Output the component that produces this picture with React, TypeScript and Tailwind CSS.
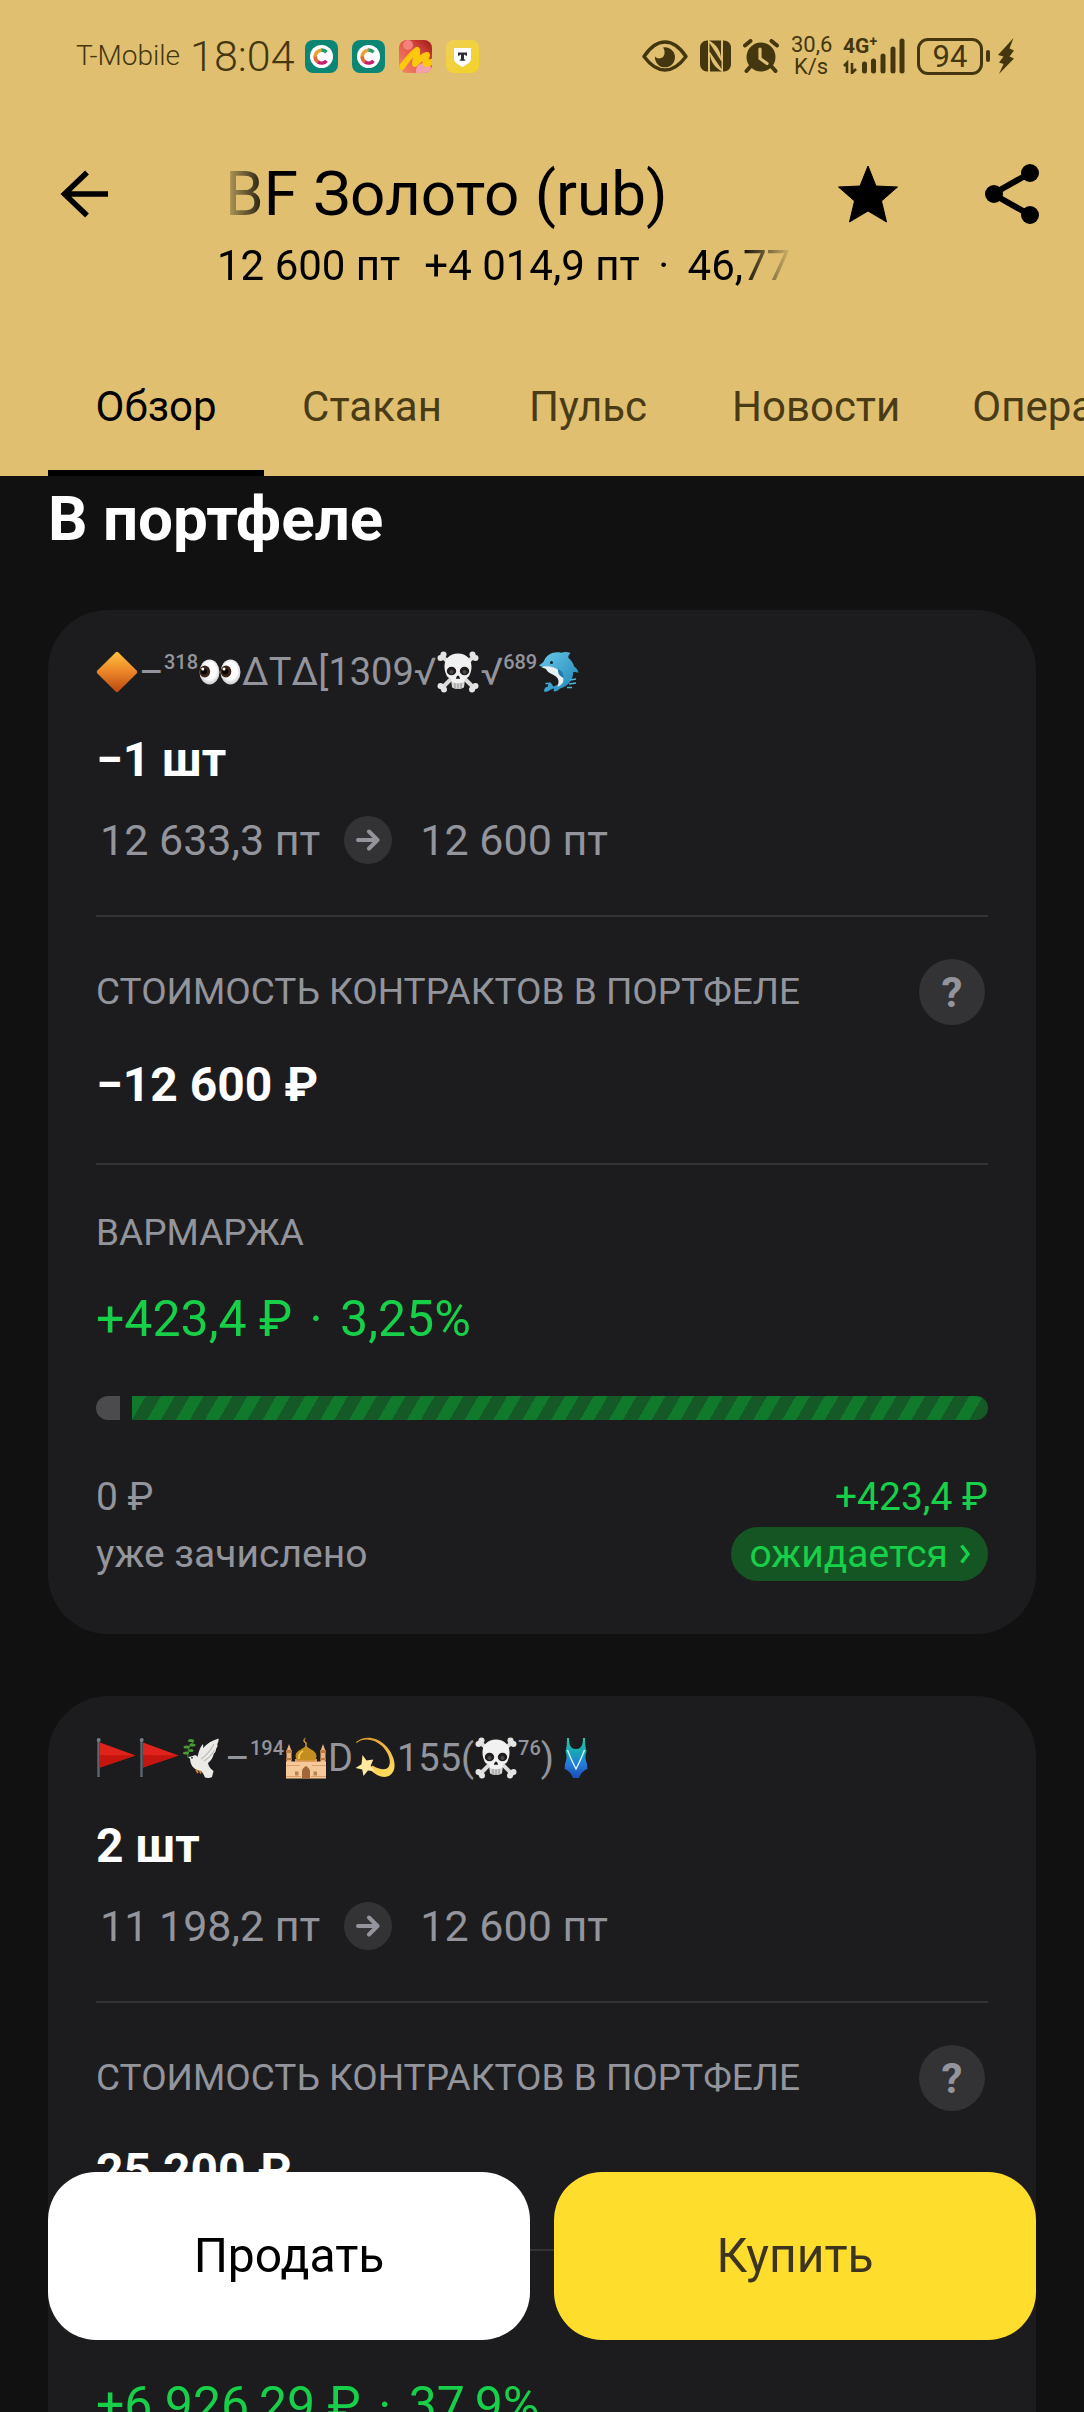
import { useState } from 'react';
import type { ReactNode } from 'react';

const Diamond = () => (
  <svg viewBox="0 0 42 42" className="h-[42px] w-[42px] shrink-0" aria-hidden="true">
    <defs>
      <linearGradient id="diamond" x1="0" y1="0" x2="0" y2="1">
        <stop offset="0" stopColor="#fdc23c" />
        <stop offset="0.45" stopColor="#ef8a2b" />
        <stop offset="1" stopColor="#b9480f" />
      </linearGradient>
    </defs>
    <path d="M19.6 1.4a2 2 0 0 1 2.8 0L40.6 19.6a2 2 0 0 1 0 2.8L22.4 40.6a2 2 0 0 1-2.8 0L1.4 22.4a2 2 0 0 1 0-2.8Z" fill="url(#diamond)" />
  </svg>
);

const Eyes = () => (
  <svg viewBox="0 0 42 42" className="h-[42px] w-[42px] shrink-0" aria-hidden="true">
    <defs>
      <radialGradient id="eyeball" cx="0.5" cy="0.45" r="0.55">
        <stop offset="0.6" stopColor="#ffffff" />
        <stop offset="1" stopColor="#c9c9c9" />
      </radialGradient>
    </defs>
    <ellipse cx="10.5" cy="21" rx="10" ry="12.5" fill="url(#eyeball)" />
    <ellipse cx="31.5" cy="21" rx="10" ry="12.5" fill="url(#eyeball)" />
    <ellipse cx="5.8" cy="20.5" rx="5.3" ry="6" fill="#3a2318" />
    <ellipse cx="27" cy="20.5" rx="5.3" ry="6" fill="#3a2318" />
    <circle cx="5" cy="20.5" r="3" fill="#080404" />
    <circle cx="26.2" cy="20.5" r="3" fill="#080404" />
    <circle cx="3.8" cy="18" r="1.5" fill="#fff" />
    <circle cx="25" cy="18" r="1.5" fill="#fff" />
  </svg>
);

const Skull = () => (
  <svg viewBox="0 0 42 42" className="h-[42px] w-[42px] shrink-0" aria-hidden="true">
    <g stroke="#dcdcdc" strokeWidth="4" strokeLinecap="round">
      <path d="M5 5 37 37M37 5 5 37" />
    </g>
    <g fill="#e4e4e4">
      <circle cx="6.5" cy="3.5" r="3" />
      <circle cx="3.5" cy="7" r="3" />
      <circle cx="35.5" cy="3.5" r="3" />
      <circle cx="38.5" cy="7" r="3" />
      <circle cx="3.5" cy="35" r="3" />
      <circle cx="7" cy="38.5" r="3" />
      <circle cx="38.5" cy="35" r="3" />
      <circle cx="35" cy="38.5" r="3" />
    </g>
    <path d="M21 2.5C12.500 2.500 7.500 8 7.500 15.500c0 3 .5 5 1.500 7.500.8 2.200 1.500 3.500 5 4.500l1 8.500c1.500 2 10.500 2 12 0l1-8.500c3.500-1 4.200-2.300 5-4.500 1-2.500 1.500-4.500 1.500-7.500C34.500 8 29.500 2.500 21 2.500Z" fill="#f1f1f1" />
    <path d="M15 31c2 1.500 10 1.500 12 0l-.5 5.500c-2 1.800-9 1.800-11 0Z" fill="#d2d2d2" />
    <path d="M18 32v5M21 32.300v5.200M24 32v5" stroke="#929292" />
    <ellipse cx="14.500" cy="20" rx="4.700" ry="4.300" fill="#211d1d" />
    <ellipse cx="27.500" cy="20" rx="4.700" ry="4.300" fill="#211d1d" />
    <circle cx="14.500" cy="21" r="2" fill="#4c4848" />
    <circle cx="27.500" cy="21" r="2" fill="#4c4848" />
    <path d="M21 24.500c-1 0-2.200 2.500-1.800 3.300.5.800 1.300-.2 1.800-.2s1.300 1 1.800.2c.4-.8-.8-3.300-1.800-3.300Z" fill="#141212" />
  </svg>
);

const Dolphin = () => (
  <svg viewBox="0 0 42 42" className="h-[42px] w-[42px] shrink-0" aria-hidden="true">
    <defs>
      <linearGradient id="dolphin" x1="0" y1="0" x2="1" y2="1">
        <stop offset="0" stopColor="#6cc9ea" />
        <stop offset="1" stopColor="#1b83b5" />
      </linearGradient>
    </defs>
    <path d="M1 14.500c2-2 4-2.500 5-4.500C8.500 3.500 16 0 23 1.800c3.500-1.300 7-1 9.500.2-1.500 1.500-2.300 3-2.200 4.800 3.200 2.500 5 5.500 6 9 2.200 1.200 3.700 3.200 4.200 6-2-.8-3.600-1-5.200-.8-.2 8-5.300 14.500-13.300 16.500-1.500 2-3.500 3-6 3-.5-1-.5-2 0-3.200L12 39c-2 1.800-4 2-6 1.500 0-3 1.500-4.500 4-5 .2-1.500 0-3 1-4.500 2.500 1 3.500 2.500 4 4.500 5-1 9-4.500 9.500-9.500C22.500 20 16 15.500 9 16c-3 0-6.500 0-8-1.500Z" fill="url(#dolphin)" />
    <path d="M3 16c6.500-1.500 14-.5 19 4.500 3 3 4 7 3 11-1.500 2-3 3.200-5.500 4.200 1.500-4 1.500-7.500-1-9.700-3.500-3-8.500-3.500-10.500-8Z" fill="#e6f1f5" />
    <path d="M20 18c3.500 1.500 6 4.500 5.500 9-3.500-1.500-6-4.500-5.500-9Z" fill="#1f7ca8" />
    <circle cx="13.500" cy="11.500" r="1.500" fill="#12222c" />
    <path d="M7.500 32.500h3M32 29l6-1M31 33l7-1M29 36.500h5" stroke="#4db4dc" strokeWidth="1.400" />
  </svg>
);

const Flag = () => (
  <svg viewBox="0 0 42 42" className="h-[42px] w-[42px] shrink-0" aria-hidden="true">
    <path d="M2.500 3v37" stroke="#5f666d" strokeWidth="2.400" />
    <circle cx="2.700" cy="3" r="2" fill="#757c83" />
    <path d="M4 5.500 39.500 18.500 4 30.500Z" fill="#e0221c" />
    <path d="M4 18 39.500 18.500 4 30.500Z" fill="#c4150f" />
  </svg>
);

const Dove = () => (
  <svg viewBox="0 0 42 42" className="h-[42px] w-[42px] shrink-0" aria-hidden="true">
    <path d="M12 18.500c1.500-.5 3 .2 3.500 1.500C17 14 18 10 21 7c.3 1.500 0 3 0 4C25 6.500 30 3.500 36.500 1.500c.3 2-.2 4-1.200 5.500.5 2 0 3.500-1.300 5 0 2-.8 3.500-2.200 4.800-1 4.200-3 7.200-5.800 9.200.5 3.500 3 6.500 5.500 8l-1.500 6c-3 1.500-5.500 1-7 .5-1-2.500-2-4.500-4-6.500-5-.5-9.500-4-10.500-9-.5-2 .5-3.500-2.500-4.500 1.500-1 4-1.300 6-2Z" fill="#ebeae6" />
    <path d="M19 22c6-4 10-9 13-15M22 24c4-2.500 8-6 10.500-11" stroke="#bdbcb8" strokeWidth="1.200" fill="none" />
    <circle cx="10" cy="20.700" r="0.900" fill="#222" />
    <path d="M6 21C5 14 7 8 12 4" stroke="#3a7e2b" strokeWidth="1.300" fill="none" />
    <g fill="#4c9a35">
      <ellipse cx="4" cy="16" rx="3" ry="1.600" />
      <ellipse cx="9" cy="13.500" rx="2.600" ry="1.600" />
      <ellipse cx="4.500" cy="10" rx="3" ry="1.600" />
      <ellipse cx="10.500" cy="8" rx="3" ry="1.500" />
      <ellipse cx="9" cy="3.500" rx="3" ry="1.600" />
    </g>
    <path d="m14 32.500 2 3.500m1.500-2.500 1.500 3" stroke="#d88e3b" strokeWidth="1.600" />
  </svg>
);

const Mosque = () => (
  <svg viewBox="0 0 42 42" className="h-[42px] w-[42px] shrink-0" aria-hidden="true">
    <path d="M4 7 6.500 14v27H1.500V14ZM38 7l2.500 7v27h-5V14Z" fill="#eeb27c" />
    <path d="M1 13h6v3H1ZM35 13h6v3h-6ZM1 21h6v2H1ZM35 21h6v2h-6Z" fill="#b97c43" />
    <path d="M1 24.500h40V41.500H1Z" fill="#f6c99b" />
    <path d="M10 22h22v3H10Z" fill="#e2a066" />
    <path d="M21 8.500c1 3 10.500 4.500 10.500 10.500 0 1.500-.5 3-1.500 4.500H12c-1-1.500-1.500-3-1.500-4.500C10.500 13 20 11.500 21 8.500Z" fill="#c58c1e" />
    <path d="M18 14c-3.500 2-4.500 4.500-4 8" stroke="#f1cc5b" strokeWidth="1.800" fill="none" />
    <path d="M21 6v4" stroke="#d59c2c" strokeWidth="1.400" />
    <path d="M23 5.500a2.800 2.800 0 1 1-1.500-4.800 2.200 2.200 0 0 0 1.500 4.800Z" fill="#d59c2c" />
    <path d="M17 41.500V34c0-2.500 2-3.500 4-5 2 1.500 4 2.500 4 5v7.500Z" fill="#a26739" />
    <path d="M10 34.500h3.500v4H10ZM28.500 34.500H32v4h-3.500Z" fill="#bb8350" />
    <path d="M1 28.500h14M27 28.500h14M1 39.500h15M26 39.500h15" stroke="#dc9f6c" strokeWidth="1.200" />
  </svg>
);

const Dizzy = () => (
  <svg viewBox="0 0 42 42" className="h-[42px] w-[42px] shrink-0" aria-hidden="true">
    <defs>
      <linearGradient id="trail" x1="0" y1="0" x2="0.400" y2="1">
        <stop offset="0" stopColor="#d9982a" />
        <stop offset="1" stopColor="#ffd95b" />
      </linearGradient>
    </defs>
    <path d="M2 5C10-1.500 22-.5 31 8c8 8 11.500 18.500 8.500 26-4 8.500-14.500 8-24-2l3-3.500c8 5 14.500 5 16.500.5 2.500-6-1-14-7-20C19.500 1.500 9.500.5 2.500 6Z" fill="url(#trail)" />
    <path d="m8.500 18 4 5.500 6.800-1-2.600 6.300 4 5.500-6.800-.8L9.500 39l-1.300-6.500L1.500 31l6-3.700Z" fill="#ffe9a0" />
  </svg>
);

const Swimsuit = () => (
  <svg viewBox="0 0 42 42" className="h-[42px] w-[42px] shrink-0" aria-hidden="true">
    <defs>
      <linearGradient id="suit" x1="0" y1="0" x2="0" y2="1">
        <stop offset="0" stopColor="#23c9ac" />
        <stop offset="0.400" stopColor="#1aa0ba" />
        <stop offset="0.650" stopColor="#2779e0" />
        <stop offset="1" stopColor="#1b4fb0" />
      </linearGradient>
    </defs>
    <path d="M12 1h2c0 6 1 11 7 11s7-5 7-11h2c0 6 .5 10 1.500 13-1.500 5-1.500 8 .5 13l.5 5c-4 1.500-6.500 4-8.500 9h-6c-2-5-4.500-7.500-8.500-9l.5-5c2-5 2-8 .5-13C11.500 11 12 7 12 1Z" fill="url(#suit)" />
    <path d="M12.500 13C15 20 18 26 21 32c3-6 6-12 8.500-19" stroke="#d9fff5" strokeWidth="1.300" fill="none" />
  </svg>
);

const Tick = ({ children }: { children: ReactNode }) => <sup className="-top-4 text-[20px] font-medium">{children}</sup>;

const CopperApp = () => (
  <svg viewBox="0 0 33 33" className="h-[33px] w-[33px]" aria-hidden="true">
    <rect width="33" height="33" rx="8" fill="#0b8574" />
    <circle cx="16.500" cy="16.500" r="11.500" fill="#fff" />
    <g fill="none" strokeWidth="3.600">
      <path d="M21.500 12.200A6.500 6.500 0 0 0 16 10.200" stroke="#1f9d6b" />
      <path d="M16.500 10.200A6.500 6.500 0 0 0 10.200 17" stroke="#e9a23a" />
      <path d="M10.200 16.500A6.500 6.500 0 0 0 13.500 22.300" stroke="#e4683a" />
      <path d="M13 22A6.500 6.500 0 0 0 21.500 20.800" stroke="#c81e6f" />
    </g>
  </svg>
);

const MarkerApp = () => (
  <svg viewBox="0 0 33 33" className="h-[33px] w-[33px]" aria-hidden="true">
    <defs>
      <linearGradient id="marker" x1="0" y1="1" x2="1" y2="0">
        <stop offset="0" stopColor="#f08c6c" />
        <stop offset="0.500" stopColor="#e8584a" />
        <stop offset="1" stopColor="#9c1717" />
      </linearGradient>
      <clipPath id="markerClip">
        <rect width="33" height="33" rx="8" />
      </clipPath>
    </defs>
    <g clipPath="url(#markerClip)">
      <rect width="33" height="33" fill="url(#marker)" />
      <circle cx="25" cy="31" r="8" fill="#f3a0ad" />
      <circle cx="9" cy="5" r="5" fill="#f2827a" />
      <path d="M2 28C8 20 13 13 18 10c1 5-2 9-2 14 4-4 7-8 12-9-1 3-3 6-1 9 2 0 3-1 5-2" fill="none" stroke="#fbc80d" strokeWidth="6" strokeLinecap="round" strokeLinejoin="round" />
    </g>
  </svg>
);

const BankApp = () => (
  <svg viewBox="0 0 33 33" className="h-[33px] w-[33px]" aria-hidden="true">
    <defs>
      <linearGradient id="bank" x1="0" y1="0" x2="1" y2="1">
        <stop offset="0" stopColor="#f0cf58" />
        <stop offset="1" stopColor="#f3d325" />
      </linearGradient>
    </defs>
    <rect width="33" height="33" rx="8" fill="url(#bank)" />
    <path d="M8 8h17v10.500c0 4-3.500 5.500-8.500 8.500C11.500 24 8 22.500 8 18.500Z" fill="#fff" />
    <path d="M12 12.500h9v3.300h-1.300l-.6-1H18v4.400l1.200.5v1.100h-5.400v-1.100l1.200-.5v-4.400h-1.100l-.6 1H12Z" fill="#2c2c36" />
  </svg>
);

function StatusBar() {
  return (
    <div className="flex h-28 items-center justify-between pl-[76px] pr-[70px] text-[#44370f]">
      <div className="flex items-center">
        <span className="text-[28px] font-light">T-Mobile</span>
        <span className="ml-[10px] text-[43px] font-light">18:04</span>
        <div className="ml-[10px] flex gap-[14px]">
          <CopperApp />
          <CopperApp />
          <MarkerApp />
          <BankApp />
        </div>
      </div>
      <div className="flex items-center">
        <svg viewBox="0 0 46 32" className="h-8 w-[46px]" fill="none" aria-hidden="true">
          <path d="M2 16.500C9 6 15 2 23 2s14 4 21 14.500C37 26 31 30 23 30S9 26 2 16.500Z" stroke="currentColor" strokeWidth="3.400" strokeLinejoin="round" />
          <path d="M21 7.500a10 10 0 1 1-8 9c3 3.500 9 2 9.500-3 .2-2.500-.2-4.500-1.500-6Z" fill="currentColor" />
        </svg>
        <svg viewBox="0 0 31 31" className="ml-3 h-8 w-[31px]" aria-hidden="true">
          <path d="M7 0h1v31H7a7 7 0 0 1-7-7V7a7 7 0 0 1 7-7ZM24 0a7 7 0 0 1 7 7v17a7 7 0 0 1-7 7h-1V0Z" fill="currentColor" />
          <path d="M10 14v17h12C15 27 11 22 10 14ZM21 17V0H9c7 4 11 9 12 17Z" fill="currentColor" />
          <path d="M9.500 2.500 21.500 21v7.500L9.500 11Z" fill="currentColor" />
        </svg>
        <svg viewBox="0 0 36 34" className="ml-3 h-[34px] w-9" aria-hidden="true">
          <circle cx="18" cy="18" r="14.500" fill="currentColor" />
          <path d="M2 6.500 7.500 2M34 6.500 28.500 2M7 28l-3.500 4M29 28l3.500 4" stroke="currentColor" strokeWidth="4" strokeLinecap="round" />
          <path d="M17 10v9.500l7 5" stroke="#e0c070" strokeWidth="3.200" strokeLinecap="round" fill="none" />
        </svg>
        <div className="ml-3 w-10 text-center text-[22px] leading-[22px]">
          30,6
          <br />
          K/s
        </div>
        <div className="relative ml-3 h-9 w-[62px]">
          <span className="absolute -top-1 left-0 text-[21px] font-bold leading-6">
            4G<sup className="text-[14px]">+</sup>
          </span>
          <svg viewBox="0 0 62 36" className="h-9 w-[62px]" aria-hidden="true">
            <path d="M21.500 26v7M30.500 23v10M40 18v15M50 11v22M59 3v30" stroke="currentColor" strokeWidth="5" strokeLinecap="round" />
            <path d="m1 28 3-3v10M9 25v10l4-4" stroke="currentColor" strokeWidth="2.600" fill="none" />
          </svg>
        </div>
        <div className="ml-3 flex h-[37px] w-[66px] items-center justify-center rounded-[11px] border-[3px] border-current text-[31px] leading-none">94</div>
        <div className="ml-[3px] h-3 w-1 rounded-sm bg-current" />
        <svg viewBox="0 0 16 36" className="ml-2 h-9 w-4" aria-hidden="true">
          <path d="M15.500 0 0 17l5.500 1.500L1 24.500l4.500 1.500L1 36 16 20.500l-4.500-2L16 12.500l-4.500-2Z" fill="currentColor" />
        </svg>
      </div>
    </div>
  );
}

const tabs = ['Обзор', 'Стакан', 'Пульс', 'Новости', 'Операции'];

function Header() {
  const [active, setActive] = useState('Обзор');
  const [starred, setStarred] = useState(true);

  return (
    <header className="shrink-0 bg-[#e0c070] text-black">
      <StatusBar />
      <div className="flex items-start pl-[60px] pr-11 pt-[46px]">
        <button type="button" aria-label="Назад" className="flex h-[72px] w-[50px] items-center">
          <svg viewBox="0 0 48 48" className="h-12 w-12" fill="none" stroke="currentColor" strokeWidth="5.500" aria-hidden="true">
            <path d="M48 24H5M27 2.500 4.500 24 27 45.500" />
          </svg>
        </button>
        <div className="ml-[107px] w-[576px] min-w-0">
          <h1 className="overflow-hidden whitespace-nowrap pl-2 text-[62px] leading-[72px] [mask-image:linear-gradient(to_right,transparent,#000_54px)]">BF Золото (rub)</h1>
          <p className="mt-2 flex gap-6 overflow-hidden whitespace-nowrap text-[42px] leading-[56px] [mask-image:linear-gradient(to_left,transparent,#000_54px)]">
            <span>12 600 пт</span>
            <span>
              +4 014,9 пт <span className="mx-2">·</span> 46,77
            </span>
          </p>
        </div>
        <button type="button" aria-label="В избранное" aria-pressed={starred} onClick={() => setStarred(!starred)} className="ml-auto flex h-[72px] items-center">
          <svg viewBox="0 0 60 58" className="h-[58px] w-[60px]" fill={starred ? 'currentColor' : 'none'} stroke="currentColor" aria-hidden="true">
            <path d="M30 1l8 20 21.500 1L43.500 36 48.500 57 30 46 11.500 57 16.500 36 .5 22 22 21Z" />
          </svg>
        </button>
        <button type="button" aria-label="Поделиться" className="ml-[86px] flex h-[72px] items-center">
          <svg viewBox="0 0 56 60" className="h-[60px] w-14" fill="currentColor" aria-hidden="true">
            <path d="M46 9 9 30l37 21" fill="none" stroke="currentColor" strokeWidth="6" />
            <circle cx="46" cy="9" r="9" />
            <circle cx="10" cy="30" r="9" />
            <circle cx="46" cy="51" r="9" />
          </svg>
        </button>
      </div>
      <nav className="mt-[42px] flex overflow-hidden pl-12 text-[42px]">
        {tabs.map((tab) => (
          <button
            key={tab}
            type="button"
            onClick={() => setActive(tab)}
            className={
              'relative h-[140px] min-w-[216px] shrink-0 px-9 ' +
              (tab === active ? 'text-black after:absolute after:inset-x-0 after:bottom-0 after:h-[6px] after:bg-black' : 'text-[#4a3b17]')
            }
          >
            {tab}
          </button>
        ))}
      </nav>
    </header>
  );
}

interface Position {
  id: number;
  name: ReactNode;
  qty: string;
  from: string;
  to: string;
  value: string;
  margin: string;
  percent: string;
  credited: string;
}

const positions: Position[] = [
  {
    id: 1,
    name: (
      <>
        <Diamond />
        <span>–<Tick>318</Tick></span>
        <Eyes />
        <span>ΔТΔ[1309√</span>
        <Skull />
        <span>√<Tick>689</Tick></span>
        <Dolphin />
      </>
    ),
    qty: '−1 шт',
    from: '12 633,3 пт',
    to: '12 600 пт',
    value: '−12 600 ₽',
    margin: '+423,4 ₽',
    percent: '3,25%',
    credited: '0 ₽',
  },
  {
    id: 2,
    name: (
      <>
        <Flag />
        <Flag />
        <Dove />
        <span>–<Tick>194</Tick></span>
        <Mosque />
        <span>D</span>
        <Dizzy />
        <span>155(</span>
        <Skull />
        <span><Tick>76</Tick>)</span>
        <Swimsuit />
      </>
    ),
    qty: '2 шт',
    from: '11 198,2 пт',
    to: '12 600 пт',
    value: '25 200 ₽',
    margin: '+6 926,29 ₽',
    percent: '37,9%',
    credited: '0 ₽',
  },
];

function PositionCard({ position }: { position: Position }) {
  return (
    <article className="rounded-[60px] bg-[#1c1c1e] px-12 pb-[53px] pt-10 text-[#93949c]">
      <div className="flex h-11 items-center gap-px text-[38px] leading-[44px]">{position.name}</div>
      <p className="mt-9 text-[48px] font-bold leading-[60px] text-white">{position.qty}</p>
      <div className="mt-6 flex h-[52px] items-center pl-1 text-[43px]">
        <span>{position.from}</span>
        <span className="mx-6 flex h-12 w-12 items-center justify-center rounded-full bg-[#333335]">
          <svg viewBox="0 0 24 24" className="h-6 w-6" fill="none" stroke="currentColor" strokeWidth="4" strokeLinecap="round" strokeLinejoin="round" aria-hidden="true">
            <path d="M2 12h19M13 3.500l8.500 8.500-8.500 8.500" />
          </svg>
        </span>
        <span className="pl-1">{position.to}</span>
      </div>

      <div className="mt-[49px] border-t-2 border-[#333335] pt-[42px]">
        <div className="flex h-[66px] items-center justify-between pr-[3px]">
          <h3 className="text-[37px]">СТОИМОСТЬ КОНТРАКТОВ В ПОРТФЕЛЕ</h3>
          <button type="button" className="h-[66px] w-[66px] rounded-full bg-[#333335] text-[42px] font-bold">?</button>
        </div>
        <p className="mt-[30px] text-[48px] font-bold leading-[60px] text-white">{position.value}</p>
      </div>

      <div className="mt-12 border-t-2 border-[#333335] pt-[42px]">
        <h3 className="text-[37px] leading-[52px]">ВАРМАРЖА</h3>
        <p className="mt-[30px] text-[50px] leading-[60px] text-[#17cf48]">
          {position.margin} <span className="mx-[5px]">·</span> {position.percent}
        </p>
        <div className="mt-[47px] flex h-6 gap-3">
          <div className="w-6 rounded-l-full bg-[#4b4b4e]" />
          <div className="flex-1 rounded-r-full bg-[repeating-linear-gradient(120deg,#10792c_0_12px,#155a26_12px_25px)]" />
        </div>
        <div className="mt-[49px] flex justify-between text-[39px] leading-[56px]">
          <span>{position.credited}</span>
          <span className="text-[#17cf48]">{position.margin}</span>
        </div>
        <div className="mt-[2px] flex items-center justify-between text-[39px] leading-[54px]">
          <span>уже зачислено</span>
          <button type="button" className="flex h-[54px] items-center rounded-full bg-[#155524] pl-[18px] pr-[18px] text-[#17cf48]">
            ожидается
            <svg viewBox="0 0 10 20" className="ml-3 h-5 w-[10px]" fill="none" stroke="currentColor" strokeWidth="3.500" aria-hidden="true">
              <path d="m1.500 1.500 6.500 8.500-6.500 8.500" />
            </svg>
          </button>
        </div>
      </div>
    </article>
  );
}

export default function App() {
  return (
    <div className="flex h-screen flex-col overflow-hidden bg-[#111112] font-[Roboto,'Noto_Sans',sans-serif]">
      <Header />
      <main className="min-h-0 flex-1 overflow-y-auto px-12 pt-[7px] [scrollbar-width:none]">
        <h2 className="mb-[55px] text-[62px] font-bold leading-[72px] text-white">В портфеле</h2>
        <div className="flex flex-col gap-[62px] pb-[300px]">
          {positions.map((position) => (
            <PositionCard key={position.id} position={position} />
          ))}
        </div>
      </main>
      <footer className="fixed inset-x-0 bottom-[72px] flex gap-6 px-12 text-[48px]">
        <button type="button" className="h-[168px] flex-1 rounded-[48px] bg-white text-black">Продать</button>
        <button type="button" className="h-[168px] flex-1 rounded-[48px] bg-[#ffdd2d] text-[#3d3520]">Купить</button>
      </footer>
    </div>
  );
}
